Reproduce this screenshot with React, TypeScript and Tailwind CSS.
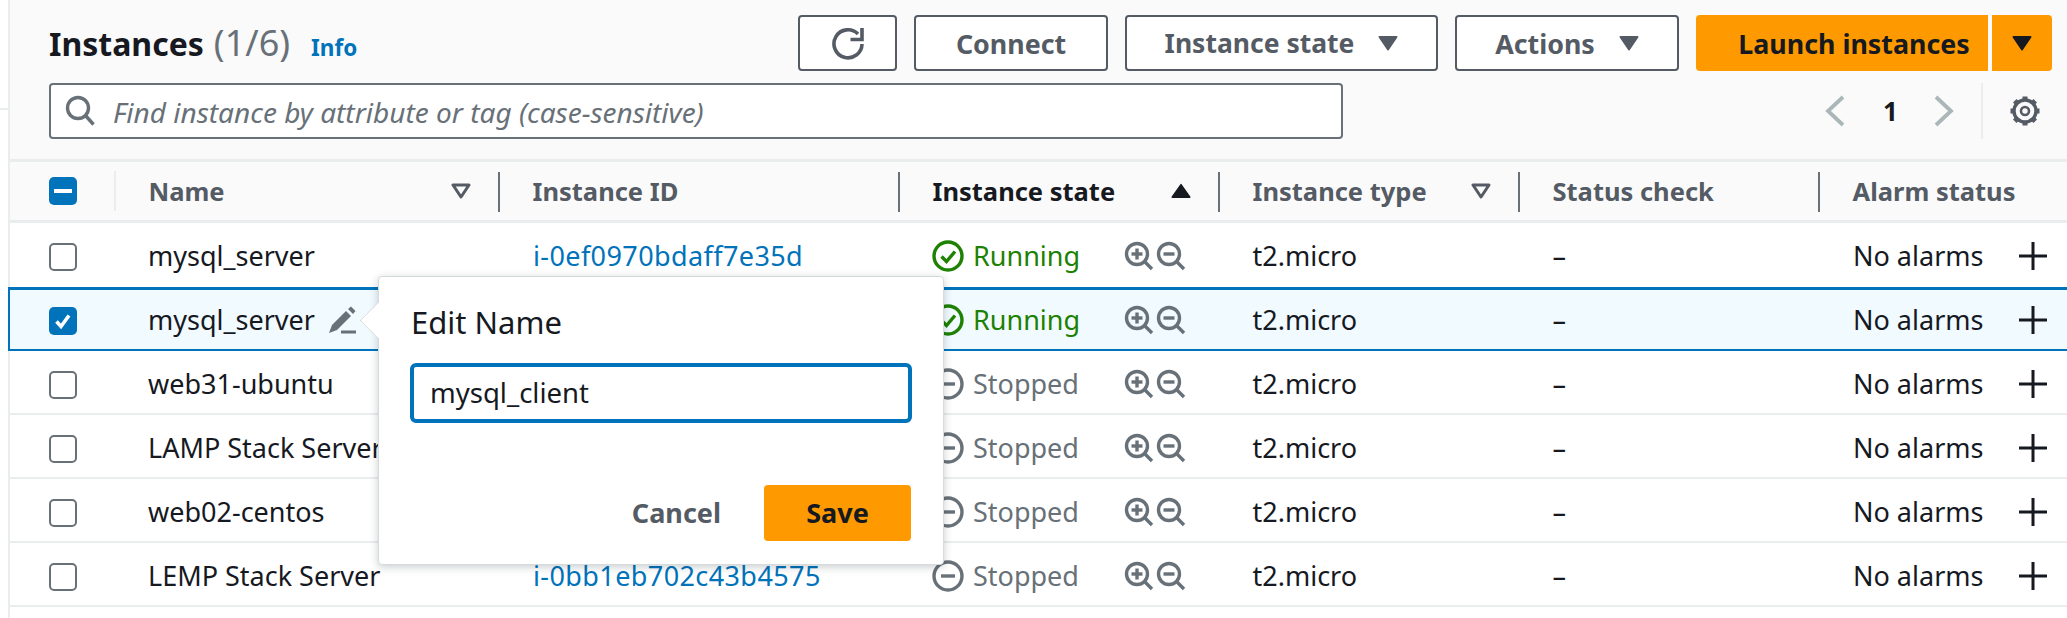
const font = "font-['Noto_Sans','Open_Sans',sans-serif]";

type Row = {
  name: string;
  id: string;
  state: "Running" | "Stopped";
  selected?: boolean;
};

// ids of rows 2-5 sit behind the popover in the screenshot
const rows: Row[] = [
  { name: "mysql_server", id: "i-0ef0970bdaff7e35d", state: "Running" },
  { name: "mysql_server", id: "", state: "Running", selected: true },
  { name: "web31-ubuntu", id: "", state: "Stopped" },
  { name: "LAMP Stack Server", id: "", state: "Stopped" },
  { name: "web02-centos", id: "", state: "Stopped" },
  { name: "LEMP Stack Server", id: "i-0bb1eb702c43b4575", state: "Stopped" },
];

const gridCols = "grid grid-cols-[106px_384px_400px_320px_300px_300px_248px]";

function Caret({ className }: { className: string }) {
  return (
    <svg viewBox="0 0 20 16" className={className} fill="currentColor">
      <path d="M1.5 1h17a1 1 0 0 1 .8 1.600L10.800 15a1 1 0 0 1-1.600 0L.7 2.600A1 1 0 0 1 1.500 1z" />
    </svg>
  );
}

function FilterCaret() {
  return (
    <svg viewBox="0 0 20 16" className="h-[16px] w-[20px] text-[#545b64]" fill="none" stroke="currentColor" strokeWidth="3" strokeLinejoin="round">
      <path d="M2 2h16l-8 12z" />
    </svg>
  );
}

function Header({ label, active, sort, filter }: { label: string; active?: boolean; sort?: boolean; filter?: boolean }) {
  return (
    <div className="flex h-full items-center pl-[32.5px]">
      <div className="flex h-[40px] w-full items-center justify-between pr-[29px]">
        <span className={`text-[25.5px] font-bold whitespace-nowrap ${active ? "text-[#16191f]" : "text-[#545b64]"}`}>{label}</span>
        {sort && (
          <svg viewBox="0 0 20 16" className="h-[16px] w-[20px] text-[#16191f]" fill="currentColor">
            <path d="M1.5 15h17a1 1 0 0 0 .8-1.600L10.800 1.400a1 1 0 0 0-1.600 0L.7 13.400a1 1 0 0 0 .8 1.600z" />
          </svg>
        )}
        {filter && <FilterCaret />}
      </div>
    </div>
  );
}

function Checkbox({ checked }: { checked?: boolean }) {
  if (checked) {
    return (
      <span className="flex h-[28px] w-[28px] items-center justify-center rounded-[5px] bg-[#0073bb]">
        <svg viewBox="0 0 20 20" className="h-[20px] w-[20px]" fill="none" stroke="#fff" strokeWidth="3.6">
          <path d="M3.500 10.500l4.500 5 8-11" />
        </svg>
      </span>
    );
  }
  return <span className="block h-[28px] w-[28px] rounded-[5px] border-2 border-[#687078] bg-white" />;
}

function StatusIcon({ state }: { state: Row["state"] }) {
  const color = state === "Running" ? "#1d8102" : "#687078";
  return (
    <svg viewBox="0 0 32 32" className="h-[32px] w-[32px] shrink-0" fill="none" stroke={color} strokeWidth="3.4">
      <circle cx="16" cy="16" r="14" />
      {state === "Running" ? <path d="M9.500 16.500l5 5 8.500-10" /> : <path d="M9 16h14" />}
    </svg>
  );
}

function ZoomIcon({ minus }: { minus?: boolean }) {
  return (
    <svg viewBox="0 0 30 30" className="h-[30px] w-[30px]" fill="none" stroke="#687078" strokeWidth="3.4">
      <circle cx="13" cy="13" r="10.500" />
      <path d="M20.500 20.500l7.500 7.500" />
      <path d="M7.500 13h11" />
      {!minus && <path d="M13 7.500v11" />}
    </svg>
  );
}

function TableRow({ row, index }: { row: Row; index: number }) {
  const border = row.selected
    ? "-ml-[2px] border-y-[3px] border-b-[2px] border-l-[2px] border-[#0073bb] bg-[#f1faff]"
    : index === 0
      ? "border-y-[3px] border-b-[2px] border-transparent bg-white"
      : "border-t-[3px] border-b-[2px] border-t-transparent border-b-[#eaeded] bg-white";

  return (
    <div className={`${gridCols} ${border} h-[64px] items-center text-[27px] text-[#16191f]`}>
      <div className="pl-[39px] pt-[2px]">
        <Checkbox checked={row.selected} />
      </div>
      <div className="flex items-center gap-[13px] pl-[32px] whitespace-nowrap">
        <span className="pt-[2px]">{row.name}</span>
        {row.selected && (
          <svg viewBox="0 0 28 28" className="h-[28px] w-[28px]" fill="#687078">
            <path d="M1 27l3-8L18 5l5 5L9 24z" />
            <path d="M20 3l3-2.500L27.500 5 25 8z" />
            <path d="M13 24.500h15v3H13z" />
          </svg>
        )}
      </div>
      <div className="pl-[33px] pt-[2px] tracking-[0.4px] text-[#0073bb]">{row.id}</div>
      <div className="flex items-center pl-[32px]">
        <StatusIcon state={row.state} />
        <span className={`ml-[9px] w-[151px] pt-[2px] ${row.state === "Running" ? "text-[#1d8102]" : "text-[#687078]"}`}>{row.state}</span>
        <span className="flex gap-[2px]">
          <ZoomIcon />
          <ZoomIcon minus />
        </span>
      </div>
      <div className="pl-[32.5px] pt-[2px]">t2.micro</div>
      <div className="pl-[32.5px] pt-[2px]">–</div>
      <div className="flex items-center justify-between pl-[33px] pr-[21px] whitespace-nowrap">
        <span className="pt-[2px]">No alarms</span>
        <svg viewBox="0 0 28 28" className="h-[28px] w-[28px]" fill="none" stroke="#16191f" strokeWidth="3">
          <path d="M14 0v28M0 14h28" />
        </svg>
      </div>
    </div>
  );
}

function OutlineButton({ children, width }: { children: React.ReactNode; width: string }) {
  return (
    <button type="button" className={`flex h-[56px] items-center justify-center gap-[24px] rounded-[4px] border-2 border-[#545b64] bg-white text-[26.800px] font-bold text-[#545b64] ${width}`}>
      {children}
    </button>
  );
}

function EditPopover() {
  return (
    <div className="absolute left-[378px] top-[276px] h-[289px] w-[566px] rounded-[4px] border border-[#d5dbdb] bg-white px-[31px] shadow-[0_2px_8px_rgba(0,28,36,0.22)]">
      <span className="absolute -left-[14px] top-[30px] h-[27px] w-[27px] rotate-45 rounded-[2px] border-b border-l border-[#d5dbdb] bg-white" />
      <div className="relative pl-[1px] pt-[25px] text-[31px] leading-[40px] text-[#16191f]">Edit Name</div>
      <div className="relative mt-[21px] flex h-[60px] items-center rounded-[6px] border-[4px] border-[#0073bb] pl-[16px] text-[27.500px] text-[#16191f]">
        mysql_client
      </div>
      <div className="relative mr-[1px] mt-[62px] flex items-center justify-end gap-[43px]">
        <span className="text-[27px] font-bold text-[#545b64]">Cancel</span>
        <button type="button" className="h-[56px] w-[147px] rounded-[4px] bg-[#ff9900] text-[27px] font-bold text-[#16191f]">Save</button>
      </div>
    </div>
  );
}

function Gear() {
  return (
    <svg viewBox="0 0 32 32" className="ml-[26px] h-[32px] w-[32px]" fill="none" stroke="#545b64">
      <circle cx="16" cy="16" r="11" strokeWidth="3.4" />
      <circle cx="16" cy="16" r="4" strokeWidth="2.6" />
      {[0, 45, 90, 135, 180, 225, 270, 315].map((deg) => (
        <path key={deg} d="M16 6V1.500" strokeWidth="5" transform={`rotate(${deg} 16 16)`} />
      ))}
    </svg>
  );
}

export default function App() {
  return (
    <div className={`${font} relative flex h-[618px] w-[2067px] overflow-hidden bg-white`}>
      <div className="w-[8px] shrink-0 pt-[108px]">
        <div className="h-[2px] bg-[#eaeded]" />
      </div>
      <div className="min-w-0 flex-1 border-l-2 border-[#eaeded]">
        <div className="h-[159px] bg-[#fafafa] pl-[39px] pr-[15px] pt-[15px]">
          <div className="flex items-center justify-between">
            <div className="flex items-baseline">
              <h1 className="text-[32px] font-bold text-[#16191f]">Instances</h1>
              <span className="ml-[10px] text-[36px] text-[#687078]">(1/6)</span>
              <span className="ml-[21px] text-[22.500px] font-bold text-[#0073bb]">Info</span>
            </div>
            <div className="flex items-center gap-[17px]">
              <OutlineButton width="w-[99px]">
                <svg viewBox="0 0 34 34" className="h-[34px] w-[34px]" fill="none" stroke="#545b64" strokeWidth="3.6">
                  <path d="M27 8A14 14 0 1 0 31 18" />
                  <path d="M31 2v11.500H19.500" />
                </svg>
              </OutlineButton>
              <OutlineButton width="w-[194px]">
                <span className="pt-[2px]">Connect</span>
              </OutlineButton>
              <OutlineButton width="w-[313px]">
                <span className="pt-[2px] text-[26.500px]">Instance state</span>
                <Caret className="h-[16px] w-[20px]" />
              </OutlineButton>
              <OutlineButton width="w-[224px]">
                <span className="pt-[2px]">Actions</span>
                <Caret className="h-[16px] w-[20px]" />
              </OutlineButton>
              <div className="flex gap-[4px]">
                <button type="button" className="h-[56px] w-[292px] rounded-l-[4px] bg-[#ff9900] pl-[24px] pt-[2px] text-[26.800px] font-bold whitespace-nowrap text-[#16191f]">
                  Launch instances
                </button>
                <button type="button" className="flex h-[56px] w-[60px] items-center justify-center rounded-r-[4px] bg-[#ff9900] text-[#16191f]">
                  <Caret className="h-[16px] w-[20px]" />
                </button>
              </div>
            </div>
          </div>
          <div className="mt-[12px] flex items-center">
            <div className="flex h-[56px] w-[1294px] items-center rounded-[4px] border-2 border-[#687078] bg-white pl-[14px] text-[28px] italic text-[#687078]">
              <svg viewBox="0 0 32 32" className="h-[32px] w-[32px] shrink-0" fill="none" stroke="#687078" strokeWidth="3.4">
                <circle cx="13" cy="13" r="10.500" />
                <path d="M20.500 20.500l8 9" />
              </svg>
              <span className="ml-[16px] whitespace-nowrap pt-[2px]">Find instance by attribute or tag (case-sensitive)</span>
            </div>
            <div className="ml-[482px] flex items-center">
              <svg viewBox="0 0 20 32" className="h-[32px] w-[20px]" fill="none" stroke="#aab7b8" strokeWidth="3.8">
                <path d="M18 2L3 16l15 14" />
              </svg>
              <span className="ml-[38px] text-[26px] font-bold text-[#16191f]">1</span>
              <svg viewBox="0 0 20 32" className="ml-[36px] h-[32px] w-[20px]" fill="none" stroke="#aab7b8" strokeWidth="3.8">
                <path d="M2 2l15 14L2 30" />
              </svg>
              <div className="ml-[27px] h-[56px] w-[2px] bg-[#eaeded]" />
              <Gear />
            </div>
          </div>
        </div>
        <div className={`${gridCols} h-[64px] border-y-[3px] border-[#eaeded] bg-[#fafafa]`}>
          <div className="flex items-center justify-between pl-[39px]">
            <span className="flex h-[28px] w-[28px] items-center justify-center rounded-[5px] bg-[#0073bb]">
              <span className="h-[4px] w-[18px] bg-white" />
            </span>
            <span className="h-[40px] w-[2px] bg-[#eaeded]" />
          </div>
          <div className="relative">
            <Header label="Name" filter />
            <span className="absolute right-0 top-[10px] h-[40px] w-[2px] bg-[#687078]" />
          </div>
          <div className="relative">
            <Header label="Instance ID" />
            <span className="absolute right-0 top-[10px] h-[40px] w-[2px] bg-[#687078]" />
          </div>
          <div className="relative">
            <Header label="Instance state" active sort />
            <span className="absolute right-0 top-[10px] h-[40px] w-[2px] bg-[#687078]" />
          </div>
          <div className="relative">
            <Header label="Instance type" filter />
            <span className="absolute right-0 top-[10px] h-[40px] w-[2px] bg-[#687078]" />
          </div>
          <div className="relative">
            <Header label="Status check" />
            <span className="absolute right-0 top-[10px] h-[40px] w-[2px] bg-[#687078]" />
          </div>
          <Header label="Alarm status" />
        </div>
        {rows.map((row, i) => (
          <TableRow key={i} row={row} index={i} />
        ))}
      </div>
      <EditPopover />
    </div>
  );
}
